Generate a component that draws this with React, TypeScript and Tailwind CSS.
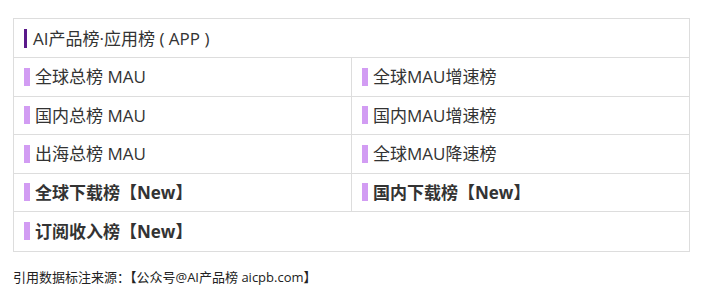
import React from "react";

const rows: [string, string | null, boolean][] = [
  ["全球总榜 MAU", "全球MAU增速榜", false],
  ["国内总榜 MAU", "国内MAU增速榜", false],
  ["出海总榜 MAU", "全球MAU降速榜", false],
  ["全球下载榜【New】", "国内下载榜【New】", true],
  ["订阅收入榜【New】", null, true],
];

function Cell({ text, bold }: { text: string; bold: boolean }) {
  return (
    <div className="flex items-center h-full pl-[10px]">
      <span className="w-[6px] h-[18px] bg-[#d29cf3] shrink-0" />
      <span
        className={`ml-[5px] text-[17px] leading-none text-[#333] ${bold ? "font-bold text-[#222]" : ""}`}
      >
        {text}
      </span>
    </div>
  );
}

export default function App() {
  return (
    <div
      className="w-[716px] h-[298px] bg-white pt-[18px] pl-[13px]"
      style={{ fontFamily: '"Open Sans", "Noto Sans CJK SC", sans-serif' }}
    >
      <div className="w-[677px] border border-[#dddddd]">
        <div className="h-[39px] flex items-center pl-[10px] border-b border-[#dddddd]">
          <span className="w-[3px] h-[19px] bg-[#5a1a8a]" />
          <span className="ml-[6px] text-[17px] leading-none text-[#333]">
            AI产品榜·应用榜 ( APP )
          </span>
        </div>
        {rows.map(([a, b, bold], i) => (
          <div
            key={i}
            className={`h-[38.5px] grid grid-cols-[338px_1fr] ${i < rows.length - 1 ? "border-b border-[#dddddd]" : ""}`}
          >
            <div className={b !== null ? "border-r border-[#dddddd]" : ""}>
              <Cell text={a} bold={bold} />
            </div>
            <div>{b !== null && <Cell text={b} bold={bold} />}</div>
          </div>
        ))}
      </div>
      <div className="mt-[19px] text-[13px] leading-none text-[#222]">
        引用数据标注来源：【公众号@AI产品榜 aicpb.com】
      </div>
    </div>
  );
}
